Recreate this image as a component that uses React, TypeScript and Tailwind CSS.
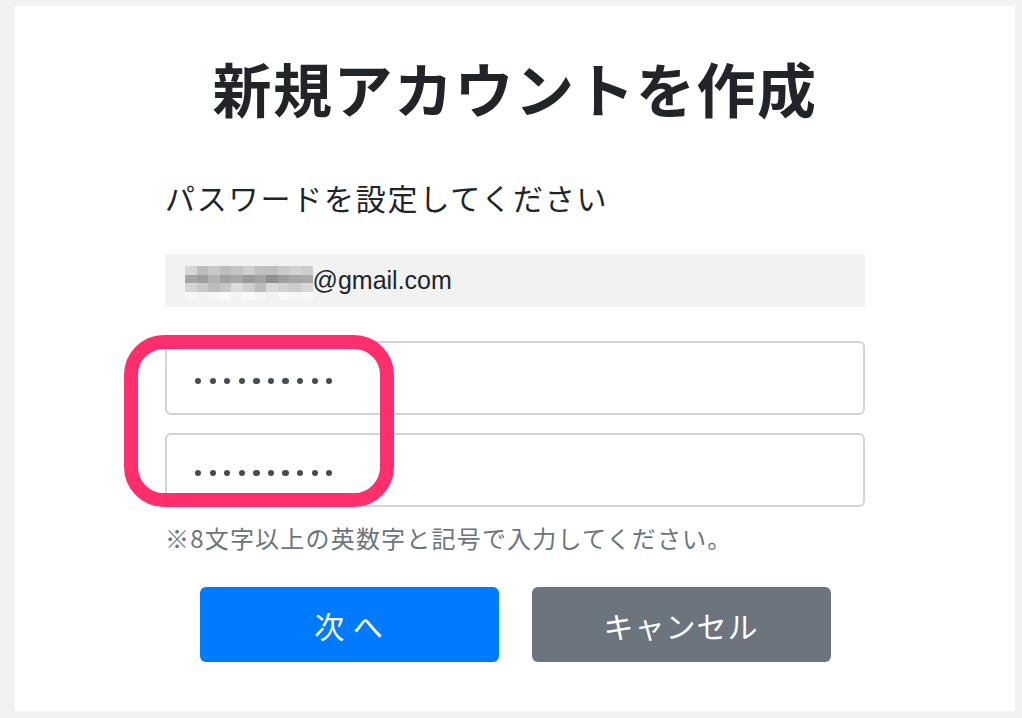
import React from "react";

const jp = { fontFamily: '"Noto Sans CJK JP", "Noto Sans", sans-serif' };

const shades = [
  ["#d6d6d6", "#bdbdbd", "#c8c8c8", "#bcbcbc", "#c4c4c4", "#cfcfcf", "#c0c0c0", "#bdbdbd", "#c9c9c9", "#d2d2d2", "#cdcdcd"],
  ["#a5a5a5", "#9e9e9e", "#b3b3b3", "#a0a0a0", "#a8a8a8", "#9b9b9b", "#a3a3a3", "#8f8f8f", "#9d9d9d", "#a6a6a6", "#a9a9a9"],
  ["#d4d4d4", "#c9c9c9", "#bdbdbd", "#c6c6c6", "#dcdcdc", "#cfcfcf", "#bcbcbc", "#d8d8d8", "#d1d1d1", "#cccccc", "#d7d7d7"],
  ["#f7f7f7", "#f3f3f3", "#f5f5f5", "#fafafa", "#f4f4f4", "#f9f9f9", "#f6f6f6", "#f2f2f2", "#f8f8f8", "#f5f5f5", "#f7f7f7"],
];

function Blur() {
  return (
    <div className="flex flex-col">
      {shades.map((row, i) => (
        <div key={i} className="flex">
          {row.map((c, j) => (
            <span key={j} className="block w-[11.6px] h-[8.5px]" style={{ backgroundColor: c }} />
          ))}
        </div>
      ))}
    </div>
  );
}

function Dots() {
  return (
    <div className="flex gap-[8.4px]">
      {Array.from({ length: 10 }).map((_, i) => (
        <span key={i} className="block w-[6.2px] h-[6.2px] rounded-full bg-[#454c53]" />
      ))}
    </div>
  );
}

export default function App() {
  return (
    <div className="w-[1022px] h-[718px] bg-[#f2f2f2] pt-[6px] pl-[15px]" style={jp}>
      <div className="w-[1000px] h-[705px] bg-white flex flex-col items-center pt-[52px]">
        <h1 className="text-[59px] leading-none font-bold text-[#212529] tracking-[1.5px]">新規アカウントを作成</h1>
        <div className="w-[700px] flex flex-col mt-[65px]">
          <p className="text-[30px] leading-none text-[#212529] tracking-[1.8px]">パスワードを設定してください</p>
          <div className="mt-[42px] h-[53px] bg-[#f2f2f2] flex items-center pl-[20px]">
            <div className="mt-[5px]">
              <Blur />
            </div>
            <span className="text-[25px] text-[#212529] leading-none" style={{ fontFamily: '"Liberation Sans", Arial, sans-serif' }}>
              @gmail.com
            </span>
          </div>
          <div className="relative mt-[34px] flex flex-col gap-[18px]">
            <div className="h-[74px] border-2 border-[#ced4da] rounded-[6px] flex items-center pl-[28px] pt-[6px]">
              <Dots />
            </div>
            <div className="h-[74px] border-2 border-[#ced4da] rounded-[6px] flex items-center pl-[28px] pt-[6px]">
              <Dots />
            </div>
            <div className="absolute left-[-41px] top-[-6px] w-[270px] h-[172px] border-[14px] border-[#ff2f6d] rounded-[40px] pointer-events-none" />
          </div>
          <p className="mt-[19px] text-[24px] leading-none text-[#6c757d] tracking-[1.2px]">※8文字以上の英数字と記号で入力してください。</p>
          <div className="mt-[37px] flex justify-center gap-[33px]">
            <button className="w-[299px] h-[75px] bg-[#007bff] rounded-[6px] text-white text-[30px] leading-none tracking-[1px]">次 へ</button>
            <button className="w-[299px] h-[75px] bg-[#6c757d] rounded-[6px] text-white text-[30px] leading-none tracking-[1px]">キャンセル</button>
          </div>
        </div>
      </div>
    </div>
  );
}
